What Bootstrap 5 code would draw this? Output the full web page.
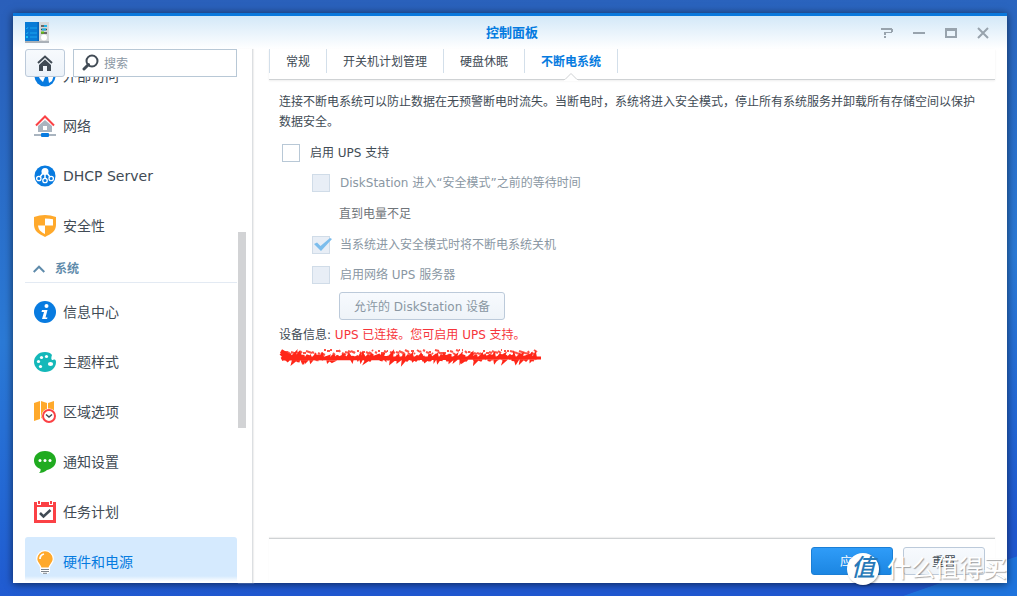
<!DOCTYPE html>
<html lang="zh-CN">
<head>
<meta charset="utf-8">
<meta name="viewport" content="width=device-width, initial-scale=1">
<title>控制面板</title>
<link href="https://cdn.jsdelivr.net/npm/bootstrap@5.3.0/dist/css/bootstrap.min.css" rel="stylesheet">
<style>
  body{font-family:"DejaVu Sans","Noto Sans CJK SC",sans-serif;font-size:12px;line-height:20px;color:#414b55}
  button,input{font-family:inherit}
  .desk{padding:13px 10px 13px 13px;
    background:linear-gradient(to bottom right,transparent 50%,#1f74dd 51%) right bottom/115px 40px no-repeat,
      linear-gradient(175deg,#2a5fba 0%,#2a62bc 8%,#2b7ad6 50%,#2366d4 75%,#2058d0 90%)}
  .win{background:#fff;border-top:3px solid #0a78dc;box-shadow:0 1px 8px rgba(0,0,0,.6)}
  .titlebar{height:33px;background:linear-gradient(#d3e8f8,#fff);padding:0 8px}
  .title-text{font-size:13px;font-weight:700;color:#057be0;margin:0}
  .side-slot{flex:1 1 0}
  .win-btn{width:32px;height:24px;border:0;background:none;color:#98a3ad;padding:0}
  .sidebar{width:224px;padding-left:12px}
  .home-btn{width:40px;height:28px;background:linear-gradient(#f7fafd,#ecf2f9);border:1px solid #bccada;border-radius:3px;padding:0;color:#414b55}
  .search-box{height:28px;border:1px solid #b8c8d6;color:#414b55;padding:0 8px}
  .search-box input{border:0;outline:0;min-width:0;width:100%;font-size:12px;padding:2px 0 0 1px}
  .search-box input::placeholder{color:#8b97a4}
  .nav-scroll{min-height:0}
  .nav-scrolled{margin-top:-26px}
  .nav-row{height:50px;padding:0 9px;gap:7px;font-size:14px;color:#414b55;text-decoration:none;border-radius:3px;flex:none}
  .nav-row.current{background:#d5eafe;color:#057be0}
  .nav-row svg{flex:none}
  .group-row{height:32px;border:0;border-bottom:1px solid #e3eaf3;background:none;color:#5f8bab;font-weight:700;padding:6px 8px 0;margin-bottom:4px;gap:10px;flex:none}
  .fade-edge{left:12px;right:0;bottom:0;height:7px;background:linear-gradient(rgba(255,255,255,0),#fff 80%)}
  .track{width:16px;border-right:1px solid #dcdfe2;padding:183px 5px 0 1px;box-shadow:1px 0 1px #f0f0f0}
  .track-thumb{width:8px;height:196px;background:#d2d3d5}
  .main-pane{padding:0 12px 0 16px;min-width:0}
  .tab-row{height:31px;border-bottom:1px solid #cfd2d4;box-shadow:0 1px 2px #eee}
  .tab-item{height:24px;border:0;border-left:1px solid #d3dfea;background:none;padding:2px 16px 0;color:#414b55;position:relative}
  .tab-item:last-child{border-right:1px solid #d3dfea;font-weight:700;color:#057be0}
  .notch{left:50%;margin-left:-7px;bottom:-8px}
  .pane-body{padding:12px 10px 0}
  .form-rows{padding:6px 3px 0}
  .opt{height:30px;gap:10px}
  .opt-sub{padding-left:30px;color:#8a97a3}
  .opt-note{height:32px;padding-left:57px;color:#6f7479}
  .tick{appearance:none;width:18px;height:18px;border:1px solid #b8c8d6;background:#fff;margin:0;flex:none}
  .tick:disabled{background:#e8eef6;border-color:#d0dce8}
  .tick-mark{left:31px;top:6px}
  .btn-soft{height:28px;border:1px solid #bccada;border-radius:3px;background:linear-gradient(#f7fafe,#eef3f8);color:#414b55;padding:2px 0 0}
  .btn-soft:disabled{color:#8a97a3;padding:2px 14px 0;margin:2px 0 0 57px}
  .btn-go{height:28px;border:1px solid #1b7fd6;border-radius:3px;background:linear-gradient(#2f9cf8,#1c86e2);color:#fff;padding:2px 0 0}
  .foot-btn{width:82px}
  .foot{border-top:1px solid #cfd2d4;box-shadow:0 -1px 1px #f0f0f0;padding:8px 10px;gap:10px}
  .device-line{height:26px;line-height:26px;margin:2px 0 0}
  .alert-text{color:#f6353b}
  .stamp{right:10px;bottom:11px;gap:8px}
  .stamp-disc{width:32px;height:32px;border-radius:50%;background:#fff;color:#2679b8;font-size:24px;font-weight:500;font-style:italic;line-height:30px;box-shadow:1px 1px 2px rgba(0,0,0,.35)}
  .stamp-text{font-size:24px;line-height:32px;color:#fff;text-shadow:1px 1px 1px rgba(0,0,0,.35)}
</style>
</head>
<body>
<div class="desk vh-100 position-relative overflow-hidden">
  <div class="win h-100 d-flex flex-column">
    <header class="titlebar d-flex align-items-center">
      <div class="side-slot ps-1">
        <svg width="24" height="21" viewBox="0 0 24 21" class="d-block"><rect width="24" height="20" fill="#d5d8da"/><rect y="19" width="24" height="2" fill="#aab1b8"/><rect width="14" height="19" fill="#087bd6"/><path d="M12.500 0h1.500v19h-1.500z" fill="#0764ba"/><path d="M1 6l1 1 1-2M5 6h7M1 11l1 1 1-2M5 11h7M5 15h7" fill="none" stroke="#1ba6ef"/><rect x="1" y="14" width="2" height="2" fill="#1bc3f5"/><path d="M16 4h6M16 7.500h6M16 11h6" stroke="#444" stroke-width="1.500"/><path d="M19 4h3M17 7.500h4" stroke="#20b3e6" stroke-width="2"/><path d="M16 10.500h3" stroke="#62bd13" stroke-width="2"/><circle cx="19" cy="15.500" r="3" fill="#fff"/></svg>
      </div>
      <h1 class="title-text">控制面板</h1>
      <div class="side-slot d-flex justify-content-end">
        <button class="win-btn" type="button" aria-label="帮助"><svg width="12" height="12" viewBox="0 0 12 12"><path d="M0 1h11v1h1v3h-1v1H5v2H3V5h7V3H0zM3 9h2v2H3z" fill="currentColor"/></svg></button>
        <button class="win-btn" type="button" aria-label="最小化"><svg width="12" height="12" viewBox="0 0 12 12"><path d="M0 5h12v2H0z" fill="currentColor"/></svg></button>
        <button class="win-btn" type="button" aria-label="最大化"><svg width="12" height="12" viewBox="0 0 12 12"><path fill-rule="evenodd" d="M0 1h12v10H0zM2 4v5h8V4z" fill="currentColor"/></svg></button>
        <button class="win-btn" type="button" aria-label="关闭"><svg width="12" height="12" viewBox="0 0 12 12"><path d="M1 1l10 10M11 1L1 11" stroke="currentColor" stroke-width="2"/></svg></button>
      </div>
    </header>
    <div class="d-flex flex-grow-1 nav-scroll">
      <aside class="sidebar d-flex flex-column position-relative flex-shrink-0">
        <div class="d-flex gap-2">
          <button class="home-btn d-flex align-items-center justify-content-center flex-shrink-0" type="button" aria-label="主页"><svg width="16" height="16" viewBox="0 0 16 16"><path d="M1 8l7-6.500L15 8" fill="none" stroke="currentColor" stroke-width="2"/><path d="M2 10l6-5.500 6 5.500v6h-4v-5H6v5H2z" fill="currentColor"/></svg></button>
          <label class="search-box d-flex align-items-center gap-1 flex-grow-1"><svg class="flex-shrink-0" width="17" height="17" viewBox="0 0 17 17" fill="none" stroke="currentColor"><circle cx="10" cy="7" r="5.500" stroke-width="2"/><path d="M6.500 10.500L2 15" stroke-width="3" stroke-linecap="round"/></svg><input type="search" placeholder="搜索" aria-label="搜索"></label>
        </div>
        <nav class="nav-scroll flex-grow-1 overflow-hidden">
          <div class="nav-scrolled d-flex flex-column">
            <a href="#" class="nav-row d-flex align-items-center"><svg width="22" height="22" viewBox="0 0 22 22"><circle cx="11" cy="11" r="10.500" fill="#087be0"/><path d="M3 8h7l1 4-2 5-3-3zM14 12l6-2-2 6-3 2z" fill="#fff"/></svg>外部访问</a>
            <a href="#" class="nav-row d-flex align-items-center"><svg width="22" height="22" viewBox="0 0 22 22"><path d="M0 19h22v2H0z" fill="#a9b4bf"/><rect x="7" y="18" width="8" height="4" rx="1" fill="#087be0"/><path d="M4 11l7-6 7 6v6H4z" fill="#a9b4bf"/><path d="M9 11h4v4H9z" fill="#fff"/><path d="M2 10.500l9-9 9 9" fill="none" stroke="#fb4145" stroke-width="2"/></svg>网络</a>
            <a href="#" class="nav-row d-flex align-items-center"><svg width="22" height="22" viewBox="0 0 22 22"><circle cx="11" cy="11" r="10.500" fill="#087be0"/><circle cx="11" cy="6.500" r="3.500" fill="#fff"/><path d="M9 8l-3 4M11 8v5M13 8l3 4" stroke="#fff" stroke-width="1.500"/><g fill="#087be0" stroke="#fff" stroke-width="1.300"><circle cx="4.800" cy="13.500" r="2.200"/><circle cx="11" cy="15.500" r="2.200"/><circle cx="17.200" cy="13.500" r="2.200"/></g></svg>DHCP Server</a>
            <a href="#" class="nav-row d-flex align-items-center"><svg width="22" height="22" viewBox="0 0 22 22"><path d="M0 2Q11-2 22 2v8c0 6-5 9-11 12C5 19 0 16 0 10z" fill="#ffa92b"/><path d="M11 3.500q5 0 8 .8V10.500H11zM4 10.500h7V19c-4-2-6.500-4-7-8.500z" fill="#fff"/></svg>安全性</a>
            <button type="button" class="group-row d-flex align-items-center"><svg width="12" height="8" viewBox="0 0 12 8" fill="none" stroke="currentColor" stroke-width="2"><path d="M.7 7L6 1.700 11.300 7"/></svg>系统</button>
            <a href="#" class="nav-row d-flex align-items-center"><svg width="22" height="22" viewBox="0 0 22 22"><circle cx="11" cy="11" r="11" fill="#087be0"/><circle cx="12.500" cy="5" r="2" fill="#fff"/><path d="M8 9h5.500l-2 7.500h2l-.5 1.500H8l2-7H7.500z" fill="#fff"/></svg>信息中心</a>
            <a href="#" class="nav-row d-flex align-items-center"><svg width="22" height="22" viewBox="0 0 22 22"><path d="M11 1C4 1 0 6 0 11s5 10 11 10 11-4 11-10c0-2-1-3-3-2-2 0-2-2-1-5-1-2-4-3-7-3z" fill="#14b8b9"/><g fill="#fff"><circle cx="4.500" cy="10.500" r="1.600"/><circle cx="7.500" cy="6.500" r="1.600"/><circle cx="12.500" cy="5.500" r="1.600"/><circle cx="6.500" cy="15.500" r="1.600"/><ellipse cx="16.500" cy="13" rx="2.600" ry="2"/></g></svg>主题样式</a>
            <a href="#" class="nav-row d-flex align-items-center"><svg width="22" height="22" viewBox="0 0 22 22"><path d="M0 2l6-2v18l-6 2zM7 0l6 2v17l-6-2zM14 2l6-2v18h-6z" fill="#ffa92b"/><circle cx="15" cy="15" r="7.500" fill="#fff"/><circle cx="15" cy="15" r="6" fill="#fff" stroke="#fb4145" stroke-width="2"/><path d="M12 13.500l3 2.500 3-2.500" fill="none" stroke="#414b55" stroke-width="1.500"/></svg>区域选项</a>
            <a href="#" class="nav-row d-flex align-items-center"><svg width="22" height="22" viewBox="0 0 22 22"><path d="M11 0c7 0 11 4.500 11 9.500S18 18 13 19c-2 2-5 3-8 3 1-1 2-2 1.500-4C2 16.500 0 13 0 9.500 0 4.500 4 0 11 0z" fill="#20ab20"/><g fill="#fff"><circle cx="6" cy="9.500" r="1.500"/><circle cx="11" cy="9.500" r="1.500"/><circle cx="16" cy="9.500" r="1.500"/></g></svg>通知设置</a>
            <a href="#" class="nav-row d-flex align-items-center"><svg width="22" height="22" viewBox="0 0 22 22"><path fill-rule="evenodd" d="M0 1h22v21H0zM3 6v13h16V6z" fill="#fb4145"/><path d="M3 0h4v4H3zM15 0h4v4h-4z" fill="#fff"/><path d="M4 0h2v3H4zM16 0h2v3h-2z" fill="#fb4145"/><path d="M6 12l3.500 3.500L16.500 9" fill="none" stroke="#414b55" stroke-width="2.500"/></svg>任务计划</a>
            <a href="#" class="nav-row current d-flex align-items-center" aria-current="page"><svg width="22" height="24" viewBox="0 0 22 24"><path d="M11 .7a8.300 8.300 0 0 1 8.300 8.300c0 4-3.300 5-4.300 9H7c-1-4-4.300-5-4.300-9A8.300 8.300 0 0 1 11 .7z" fill="#ffa92b" stroke="#fff" stroke-width="1.200"/><path d="M6 9q0-4 4-5" stroke="#fff" stroke-width="1.800" fill="none"/><path d="M6 18h10v4l-3 2H9l-3-2z" fill="#fff"/><path d="M7 19.500h8M7 21.500h8M9 23.300h4" stroke="#7d858d"/></svg>硬件和电源</a>
          </div>
        </nav>
        <div class="fade-edge position-absolute"></div>
      </aside>
      <div class="track flex-shrink-0"><div class="track-thumb"></div></div>
      <main class="main-pane flex-grow-1 d-flex flex-column">
        <div class="tab-row d-flex" role="tablist">
          <button class="tab-item" type="button" role="tab">常规</button>
          <button class="tab-item" type="button" role="tab">开关机计划管理</button>
          <button class="tab-item" type="button" role="tab">硬盘休眠</button>
          <button class="tab-item" type="button" role="tab" aria-selected="true">不断电系统<svg class="notch position-absolute" width="14" height="9" viewBox="0 0 14 9"><path d="M0 9V7.500L7 1l7 6.500V9z" fill="#fff"/><path d="M0 7.500h1L7 1.500l6 6h1" fill="none" stroke="#cfd2d4"/></svg></button>
        </div>
        <div class="pane-body flex-grow-1">
          <p class="mb-0">连接不断电系统可以防止数据在无预警断电时流失。当断电时，系统将进入安全模式，停止所有系统服务并卸载所有存储空间以保护数据安全。</p>
          <div class="form-rows">
            <label class="opt d-flex align-items-center"><input class="tick" type="checkbox">启用 UPS 支持</label>
            <label class="opt opt-sub d-flex align-items-center"><input class="tick" type="checkbox" disabled>DiskStation 进入“安全模式”之前的等待时间</label>
            <div class="opt-note d-flex align-items-center">直到电量不足</div>
            <label class="opt opt-sub d-flex align-items-center position-relative"><input class="tick" type="checkbox" checked disabled>当系统进入安全模式时将不断电系统关机<svg class="tick-mark position-absolute" width="19" height="16" viewBox="0 0 19 16"><path d="M1 8l3-1.500L7.500 10 17 2l2 1L8 15z" fill="#7cbdec"/></svg></label>
            <label class="opt opt-sub d-flex align-items-center"><input class="tick" type="checkbox" disabled>启用网络 UPS 服务器</label>
            <button class="btn-soft" type="button" disabled>允许的 DiskStation 设备</button>
          </div>
          <p class="device-line">设备信息: <span class="alert-text">UPS 已连接。您可启用 UPS 支持。</span></p>
          <svg class="d-block" width="266" height="20" viewBox="0 0 266 20" fill="none" stroke="#ff2618" id="scribble" aria-hidden="true"></svg>
        </div>
        <div class="foot d-flex justify-content-end">
          <button class="btn-go foot-btn" type="button">应用</button>
          <button class="btn-soft foot-btn" type="button">重置</button>
        </div>
      </main>
    </div>
  </div>
  <div class="stamp position-absolute d-flex align-items-center">
    <span class="stamp-disc text-center">值</span><span class="stamp-text">什么值得买</span>
  </div>
</div>
<script src="https://cdn.jsdelivr.net/npm/bootstrap@5.3.0/dist/js/bootstrap.bundle.min.js"></script>
<script>
  // Marker strokes that cover the UPS model line
  let seed = 7;
  const rnd = () => (seed = (seed * 16807) % 2147483647) / 2147483647;
  let heavy = 'M5 10 L262 10 L5 11', light = '';
  for (let x = 3; x < 258; x += 3) {
    heavy += ` L${x + Math.round(rnd() * 5)} ${6 + Math.round(rnd() * 3)} L${x + Math.round(rnd() * 4)} ${10 + Math.round(rnd() * 4)}`;
    light += `M${x} ${2 + Math.round(rnd() * 3)} l${1 + Math.round(rnd() * 3)} ${Math.round(rnd() * 2)} `;
  }
  document.getElementById('scribble').innerHTML =
    `<path d="${heavy}" stroke-width="3"/><path d="${light}" stroke-width="2" opacity=".8"/><path d="M2 3l10 6M2 5l8 8" stroke-width="4"/>`;
</script>
</body>
</html>
